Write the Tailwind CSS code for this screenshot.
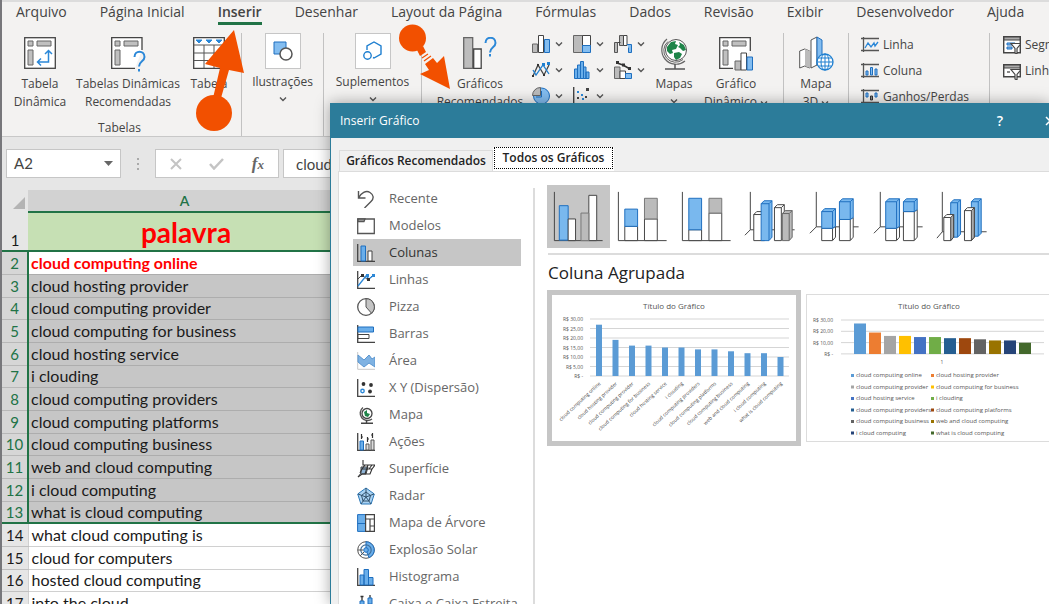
<!DOCTYPE html>
<html lang="pt-BR">
<head>
    <meta charset="UTF-8">
    <meta name="viewport" content="width=device-width, initial-scale=1.0">
    <title>Inserir Gráfico</title>
    <script src="https://cdn.jsdelivr.net/npm/@tailwindcss/browser@4"></script>
</head>
<body class="relative h-screen overflow-hidden border-l-2 border-[#77777b] bg-[#e6e6e6] font-['Open_Sans',sans-serif] text-[#444]">

    <!-- shared icons -->
    <svg class="hidden">
        <symbol id="chev" viewBox="0 0 8 6"><path d="M1 1.5l3 3 3-3" fill="none" stroke="#555" stroke-width="1.4"/></symbol>
        <symbol id="globe" viewBox="0 0 32 34">
            <path d="M9 3A14 14 0 1 0 27 25" fill="none" stroke="#666" stroke-width="1.2"/>
            <path d="M10 5.500A11.500 11.500 0 1 0 25 23.500" fill="none" stroke="#666" stroke-width="1"/>
            <circle cx="18" cy="14" r="10.500" fill="#fff" stroke="#555"/>
            <path d="M9 11l4-5 5-1-1 3 3 1-2 4-4 1 1 3-3 1-3-3zM21 6l5 3 2 5-3 1-3-3-2-1 2-2zM16 17l5-1 3 2-2 4-4 2-2-3z" fill="#1e8449"/>
            <path d="M17 28v5M7 33h20" stroke="#555" stroke-width="1.500"/>
        </symbol>
        <symbol id="globeSmall" viewBox="0 0 18 18">
            <path d="M6 1.500A7 7 0 1 0 15 13" fill="none" stroke="#555" stroke-width="1.400"/>
            <circle cx="10" cy="7.500" r="5" fill="#fff" stroke="#444" stroke-width="1.300"/>
            <path d="M7 6l3-2v3l3 1-2 3-3-1z" fill="#1e8449"/>
            <path d="M9.500 14v3M4 17.200h12" stroke="#444" stroke-width="1.400"/>
        </symbol>
    </svg>

    <nav class="flex h-[27px] items-start gap-[33px] overflow-hidden border-t-2 border-[#dcdcdc] bg-[#f3f2f1] pl-[14px] text-[14px] leading-5 whitespace-nowrap">
        <a href="#">Arquivo</a>
        <a href="#">Página Inicial</a>
        <a href="#" class="border-b-[3px] border-[#217346] font-semibold">Inserir</a>
        <a href="#">Desenhar</a>
        <a href="#">Layout da Página</a>
        <a href="#">Fórmulas</a>
        <a href="#">Dados</a>
        <a href="#">Revisão</a>
        <a href="#">Exibir</a>
        <a href="#">Desenvolvedor</a>
        <a href="#">Ajuda</a>
    </nav>

    <section class="flex h-[110px] overflow-hidden border-b border-[#c8c8c8] bg-[#f3f2f1] pt-[6px] text-[12px] leading-[18px] *:shrink-0 *:border-r *:border-[#c2c2c2]">
        <div class="flex w-[240px] flex-col px-1">
            <div class="flex pt-1">
                <button class="flex w-[68px] flex-col items-center gap-[6px]">
                    <svg class="size-8" viewBox="0 0 32 32" fill="none">
                        <rect x=".7" y=".7" width="30.600" height="30.600" fill="#fff" stroke="#444" stroke-width="1.300"/>
                        <path d="M4 4h5v5H4zM13 4h14v5H13zM4 13h5v15H4z" fill="#c0c0c0" stroke="#666"/>
                        <path d="M24.500 14v11H14M21 17l3.500-3.500L28 17M17 21.500L13.500 25l3.500 3.500" stroke="#2b88d8" stroke-width="1.500"/>
                    </svg>
                    <span>Tabela<br>Dinâmica</span>
                </button>
                <button class="flex w-[108px] flex-col items-center gap-[6px] whitespace-nowrap">
                    <svg class="h-8 w-[34px] overflow-visible" viewBox="0 0 34 32" fill="none">
                        <path d="M31 13V.7H.7v30.600H24" fill="#fff" stroke="#444" stroke-width="1.300"/>
                        <path d="M4 4h5v5H4zM13 4h14v5H13zM4 13h5v15H4z" fill="#c0c0c0" stroke="#666"/>
                        <path d="M23.500 20c0-7 10-7 10 0 0 4.500-5.500 4-5.500 9.500M28 32v2.500" stroke="#2b88d8" stroke-width="2"/>
                    </svg>
                    <span>Tabelas Dinâmicas<br>Recomendadas</span>
                </button>
                <button class="flex w-[54px] flex-col items-center gap-[6px]">
                    <svg class="size-8" viewBox="0 0 32 32" fill="none">
                        <path d="M.7.7h30.600v30.600H.7z" fill="#fff" stroke="#444" stroke-width="1.300"/>
                        <path d="M1 8h30M1 16h30M1 23.500h30M11 8v23M21 8v23" stroke="#555"/>
                        <path d="M3 3h6L6 6zM13 3h6l-3 3zM23 3h6l-3 3z" fill="#2b88d8" stroke="#2b88d8"/>
                    </svg>
                    <span>Tabela</span>
                </button>
            </div>
            <p class="mt-auto pr-1 text-center leading-4">Tabelas</p>
        </div>

        <div class="w-[82px]">
            <button class="flex w-full flex-col items-center">
                <span class="flex size-9 items-center justify-center border border-[#c6c6c6] bg-white">
                    <svg class="size-5" viewBox="0 0 20 20"><path d="M1 1h12v12H1z" fill="#83bdf0" stroke="#1e6fbf"/><circle cx="13" cy="13" r="6" fill="#fff" stroke="#555" stroke-width="1.500"/></svg>
                </span>
                <span class="mt-1">Ilustrações</span>
                <svg class="mt-[5px] h-[6px] w-2"><use href="#chev"/></svg>
            </button>
        </div>

        <div class="w-[98px]">
            <button class="flex w-full flex-col items-center">
                <span class="flex size-9 items-center justify-center border border-[#c6c6c6] bg-white">
                    <svg class="size-5" viewBox="0 0 20 20" fill="none" stroke="#1e7fd0" stroke-width="1.400"><path d="M4 9V5l7-4 7 4v8l-7 4-1-.5"/><circle cx="4.500" cy="14.500" r="3.700"/></svg>
                </span>
                <span class="mt-1">Suplementos</span>
                <svg class="mt-[5px] h-[6px] w-2"><use href="#chev"/></svg>
            </button>
        </div>

        <div class="flex w-[362px] items-start pl-[10px]">
            <button class="flex w-[96px] flex-col items-center gap-[6px] pt-1">
                <svg class="h-8 w-[34px]" viewBox="0 0 34 32" fill="none">
                    <path d="M.7.7h9v30.600h-9z" fill="#bdbdbd" stroke="#666" stroke-width="1.300"/>
                    <path d="M10.700 12h7.500v19.300h-7.500z" fill="#fff" stroke="#444" stroke-width="1.300"/>
                    <path d="M22.500 6c0-7 10-7 10 0 0 4.500-5.500 4-5.500 9.500M27 17v2.500" stroke="#2b88d8" stroke-width="2"/>
                </svg>
                <span>Gráficos<br>Recomendados</span>
            </button>
            <div class="ml-1 grid w-[123px] grid-cols-3 gap-y-2 pt-[2px] *:flex *:items-center *:gap-[5px]">
                <button aria-label="Colunas">
                    <svg class="size-[18px]" viewBox="0 0 18 18"><path d="M.5 9h5v8.500h-5z" fill="#bbb" stroke="#666"/><path d="M6.500.5h5v17h-5z" fill="#fff" stroke="#444"/><path d="M12.500 4.500h5v13h-5z" fill="#83bdf0" stroke="#1e6fbf"/></svg>
                    <svg class="h-[6px] w-2"><use href="#chev"/></svg>
                </button>
                <button aria-label="Hierarquia">
                    <svg class="size-[18px]" viewBox="0 0 18 18"><path d="M.5.5h9v17h-9z" fill="#bbb" stroke="#666"/><path d="M9.500.5h8v10h-8z" fill="#fff" stroke="#444"/><path d="M9.500 10.500h8v7h-8z" fill="#83bdf0" stroke="#1e6fbf"/></svg>
                    <svg class="h-[6px] w-2"><use href="#chev"/></svg>
                </button>
                <button aria-label="Cascata">
                    <svg class="size-[18px]" viewBox="0 0 18 18"><path d="M.5 7.500h3v10h-3zM5.500.5h4v10h-4z" fill="#bbb" stroke="#555"/><path d="M3.500 7.500h3M9.500.5h3.500v10h-3.500z" fill="#fff" stroke="#444"/><path d="M13 9.500h4.500v8h-3v-5" fill="#83bdf0" stroke="#1e6fbf"/></svg>
                    <svg class="h-[6px] w-2"><use href="#chev"/></svg>
                </button>
                <button aria-label="Linhas">
                    <svg class="size-[18px]" viewBox="0 0 18 18" fill="none"><path d="M1 15L6 4l6 10 5-10" stroke="#444" stroke-width="1.300"/><path d="M1 9l3 5 7-10 6 9" stroke="#1e7fd0" stroke-width="1.300"/><path d="M0 14h2v2H0zM5 3h2v2H5zM11 13h2v2h-2z" fill="#333"/><path d="M10 2h3v3h-3zM15 1h3v3h-3z" fill="#1e7fd0"/></svg>
                    <svg class="h-[6px] w-2"><use href="#chev"/></svg>
                </button>
                <button aria-label="Histograma">
                    <svg class="size-[18px]" viewBox="0 0 18 18"><path d="M1.500 8h3v9.500h-3zM4.500 4h3v13.500h-3zM7.500.5h3v17h-3zM10.500 6h2.500v11.500h-2.500zM13 11h3v6.500h-3z" fill="#6aaeea" stroke="#1e6fbf"/></svg>
                    <svg class="h-[6px] w-2"><use href="#chev"/></svg>
                </button>
                <button aria-label="Combinação">
                    <svg class="size-[18px]" viewBox="0 0 18 18"><path d="M.5 6h5.500v11.500H.5z" fill="#bbb" stroke="#666"/><path d="M6 10h5.500v7.500H6z" fill="#fff" stroke="#444"/><path d="M11.500 12.500h6v5h-6z" fill="#83bdf0" stroke="#1e6fbf"/><path d="M3 2l6 2 7 4" fill="none" stroke="#333" stroke-width="1.500"/><path d="M2 0h3v3H2zM8 2.500h3v3H8zM14 6h3v3h-3z" fill="#333"/></svg>
                    <svg class="h-[6px] w-2"><use href="#chev"/></svg>
                </button>
                <button aria-label="Pizza">
                    <svg class="size-[18px]" viewBox="0 0 18 18"><circle cx="9.500" cy="9" r="8" fill="#83bdf0" stroke="#1e6fbf"/><path d="M8.500 8.500V.5a8 8 0 0 0-8 8z" fill="#bbb" stroke="#666"/><path d="M9.500 4v6H4" fill="none" stroke="#1e6fbf"/></svg>
                    <svg class="h-[6px] w-2"><use href="#chev"/></svg>
                </button>
                <button aria-label="Dispersão">
                    <svg class="size-[18px]" viewBox="0 0 18 18"><path d="M.7 0v17.300H18" fill="none" stroke="#444" stroke-width="1.400"/><path d="M4 10h2v2H4zM13 1h3v3h-3zM12 9h2v2h-2z" fill="#444"/><path d="M4 4h2v2H4zM8 7h2v2H8zM9 11h2v2H9z" fill="#2b88d8"/></svg>
                    <svg class="h-[6px] w-2"><use href="#chev"/></svg>
                </button>
            </div>
            <button class="flex w-[38px] flex-col items-center pt-[3px]">
                <svg class="h-[34px] w-8"><use href="#globe"/></svg>
                <span class="mt-[5px]">Mapas</span>
                <svg class="mt-[5px] h-[6px] w-2"><use href="#chev"/></svg>
            </button>
            <button class="ml-[7px] flex w-[72px] flex-col items-center gap-[6px] pt-1 whitespace-nowrap">
                <svg class="h-8 w-[34px] overflow-visible" viewBox="0 0 34 32">
                    <path d="M31.300 14V.7H.7v30.600H14" fill="#fff" stroke="#444" stroke-width="1.300"/>
                    <path d="M4 4h5v5H4zM13 4h14v5H13zM4 13h5v15H4z" fill="#c0c0c0" stroke="#666"/>
                    <path d="M16 24h6v9h-6z" fill="#bbb" stroke="#666"/><path d="M22 16h5.500v17H22z" fill="#fff" stroke="#444"/><path d="M28 20h5.500v13H28z" fill="#83bdf0" stroke="#1e6fbf"/>
                </svg>
                <span>Gráfico<br>Dinâmico <svg class="inline h-[6px] w-2"><use href="#chev"/></svg></span>
            </button>
        </div>

        <div class="w-[65px]">
            <button class="flex w-full flex-col items-center gap-[6px] pt-1">
                <svg class="h-8 w-[34px] overflow-visible" viewBox="0 0 34 32">
                    <path d="M.7 14l5-2 5 2v17l-5-2-5 2z" fill="#fff" stroke="#555"/><path d="M6 12l5 2v17l-5-2z" fill="#bbb"/>
                    <path d="M12 3l6-3v28l-6 3z" fill="#fff" stroke="#555"/><path d="M18 0l5 3v26l-5-1z" fill="#83bdf0" stroke="#1e6fbf"/>
                    <circle cx="26" cy="25" r="8" fill="#fff" stroke="#1e7fd0" stroke-width="1.300"/>
                    <path d="M18 25h16M26 17v16M19.500 21h13M19.500 29h13" stroke="#1e7fd0"/><ellipse cx="26" cy="25" rx="4" ry="8" fill="none" stroke="#1e7fd0"/>
                </svg>
                <span>Mapa<br>3D <svg class="inline h-[6px] w-2"><use href="#chev"/></svg></span>
            </button>
        </div>

        <div class="flex w-[141px] flex-col gap-2 pt-[3px] pl-3 *:flex *:items-center *:gap-1">
            <button>
                <svg class="size-[18px]" viewBox="0 0 18 18" fill="none"><path d="M2.500 1v15M0 2.500h18M0 14.500h18" stroke="#555" stroke-width="1.300"/><path d="M4 12l3-5 3 4 3-4 1 3 3-4" stroke="#2b88d8" stroke-width="1.300"/></svg>
                Linha
            </button>
            <button>
                <svg class="size-[18px]" viewBox="0 0 18 18" fill="none"><path d="M2.500 1v15M0 2.500h18M0 14.500h18" stroke="#555" stroke-width="1.300"/><path d="M5 9h2v4H5zM9.500 5.500h2V13h-2zM14 7h2v6h-2z" fill="#83bdf0" stroke="#1e6fbf"/></svg>
                Coluna
            </button>
            <button>
                <svg class="size-[18px]" viewBox="0 0 18 18" fill="none"><path d="M2.500 1v15M0 2.500h18M0 14.500h18" stroke="#555" stroke-width="1.300"/><path d="M5 5h2v4H5zM14 5h2v4h-2z" fill="#83bdf0" stroke="#1e6fbf"/><path d="M9.500 8h2v4h-2z" fill="#888" stroke="#333"/></svg>
                Ganhos/Perdas
            </button>
        </div>

        <div class="flex w-[140px] flex-col gap-2 pt-[3px] pl-[13px] *:flex *:items-center *:gap-1">
            <button>
                <svg class="size-[18px]" viewBox="0 0 18 18"><path d="M.7.7h16.600v16H.7z" fill="#fff" stroke="#444" stroke-width="1.400"/><path d="M1 1h16v3H1z" fill="#aaa" stroke="#444"/><path d="M4 7h8v2H4zM4 11h5v2H4z" fill="#83bdf0" stroke="#1e6fbf"/><path d="M8 7.500h10l-4 5V18l-2-1v-4.500z" fill="#fff" stroke="#444" stroke-width="1.200"/></svg>
                Segmentação
            </button>
            <button>
                <svg class="size-[18px]" viewBox="0 0 18 18"><path d="M.7 2.700h16.600v12H.7z" fill="#fff" stroke="#444" stroke-width="1.400"/><path d="M1 3h16v3H1z" fill="#aaa" stroke="#444"/><path d="M4 9h3v2H4z" fill="#888"/><path d="M8 7.500h10l-4 5V18l-2-1v-4.500z" fill="#fff" stroke="#444" stroke-width="1.200"/></svg>
                Linha do Tempo
            </button>
        </div>
    </section>

    <!-- formula bar -->
    <div class="flex h-[53px] items-center pl-1 font-['Lato',sans-serif] text-[15px]">
        <button class="flex h-[29px] w-[115px] items-center justify-between border border-[#c6c6c6] bg-white pr-[7px] pl-[7px]">
            A2
            <svg class="h-[5px] w-[9px]" viewBox="0 0 9 5"><path d="M0 0h9L4.500 5z" fill="#666"/></svg>
        </button>
        <svg class="mr-[15px] ml-4 h-3 w-[3px]" viewBox="0 0 3 12"><path d="M0 0h2v2H0zM0 5h2v2H0zM0 10h2v2H0z" fill="#aaa"/></svg>
        <div class="flex h-[29px] w-[124px] items-center justify-between border border-[#c6c6c6] bg-white px-[14px]">
            <button aria-label="Cancelar"><svg class="size-3" viewBox="0 0 12 12"><path d="M1 1l10 10M11 1L1 11" stroke="#c4c4c4" stroke-width="2"/></svg></button>
            <button aria-label="Inserir"><svg class="h-3 w-[15px]" viewBox="0 0 15 12"><path d="M1 6l4 4.500L14 1" fill="none" stroke="#c4c4c4" stroke-width="2.500"/></svg></button>
            <button class="font-['Liberation_Serif',serif] text-[17px] leading-none font-bold text-[#666] italic" aria-label="Inserir função">f<span class="text-[13px]">x</span></button>
        </div>
        <input aria-label="Barra de fórmulas" value="cloud computing online" class="ml-1 h-[29px] flex-1 border border-[#c6c6c6] bg-white pl-3">
    </div>

    <!-- worksheet -->
    <table class="w-[339px] table-fixed border-collapse bg-white font-['Lato',sans-serif] text-[16px] leading-5 text-[#1a1a1a]">
        <thead>
            <tr class="h-[22px] bg-[#e6e6e6]">
                <th class="w-[26px] pr-[3px]"><svg class="mt-1 ml-auto size-3" viewBox="0 0 12 12"><path d="M12 0v12H0z" fill="#b4b4b4"/></svg></th>
                <th class="border-b-2 border-[#217346] bg-[#d2d2d2] text-[14px] font-semibold text-[#217346]">A</th>
            </tr>
        </thead>
        <tbody class="[&_td]:truncate [&_td]:border-b [&_td]:border-[#b0b0b0] [&_td]:py-0 [&_td]:pl-[3px] [&_th]:border-b [&_th]:border-[#c0c0c0] [&_th]:bg-[#e6e6e6] [&_th]:p-0 [&_th]:text-[15px] [&_th]:font-normal">
            <tr class="h-[39px] text-center"><th class="align-bottom">1</th><td class="bg-[#c6e0b4] text-[28px] font-bold text-[#f00]">palavra</td></tr>
        </tbody>
        <tbody class="border-y-2 border-[#217346] [&_td]:truncate [&_td]:border-b [&_td]:border-l-2 [&_td]:border-b-[#adadad] [&_td]:border-l-[#217346] [&_td]:bg-[#c6c6c6] [&_td]:py-0 [&_td]:pl-[2px] [&_th]:border-b [&_th]:border-b-[#b8b8b8] [&_th]:bg-[#d6d6d6] [&_th]:p-0 [&_th]:text-[15px] [&_th]:font-normal [&_th]:text-[#217346] [&_tr]:h-[23px] [&_tr:nth-child(3n)]:h-[22px]">
            <tr><th>2</th><td class="bg-white! font-bold text-[#f00]">cloud computing online</td></tr>
            <tr><th>3</th><td>cloud hosting provider</td></tr>
            <tr><th>4</th><td>cloud computing provider</td></tr>
            <tr><th>5</th><td>cloud computing for business</td></tr>
            <tr><th>6</th><td>cloud hosting service</td></tr>
            <tr><th>7</th><td>i clouding</td></tr>
            <tr><th>8</th><td>cloud computing providers</td></tr>
            <tr><th>9</th><td>cloud computing platforms</td></tr>
            <tr><th>10</th><td>cloud computing business</td></tr>
            <tr><th>11</th><td>web and cloud computing</td></tr>
            <tr><th>12</th><td>i cloud computing</td></tr>
            <tr><th>13</th><td>what is cloud computing</td></tr>
        </tbody>
        <tbody class="[&_td]:truncate [&_td]:border-b [&_td]:border-l [&_td]:border-[#d0d0d0] [&_td]:py-0 [&_td]:pl-[3px] [&_th]:border-b [&_th]:border-[#c0c0c0] [&_th]:bg-[#e6e6e6] [&_th]:p-0 [&_th]:text-[15px] [&_th]:font-normal [&_tr]:h-[23px] [&_tr:nth-child(3n)]:h-[22px]">
            <tr><th>14</th><td>what cloud computing is</td></tr>
            <tr><th>15</th><td>cloud for computers</td></tr>
            <tr><th>16</th><td>hosted cloud computing</td></tr>
            <tr><th>17</th><td>into the cloud</td></tr>
        </tbody>
    </table>

    <!-- dialog -->
    <div role="dialog" aria-labelledby="dialogTitle" class="absolute top-[103px] right-0 bottom-0 left-[328px] flex flex-col border-l border-[#2c7c9a] bg-[#f0f0f0] shadow-[0_0_14px_rgba(0,0,0,0.35)]">
        <header class="flex h-[35px] shrink-0 items-center overflow-hidden bg-[#2c7c9a] pl-[9px] text-[12px] text-white">
            <h2 id="dialogTitle">Inserir Gráfico</h2>
            <button class="ml-auto w-10 text-[14px] font-semibold" aria-label="Ajuda">?</button>
            <button class="ml-[25px] -mr-[6px]" aria-label="Fechar"><svg class="size-[10px]" viewBox="0 0 10 10"><path d="M1 1l8 8M9 1L1 9" stroke="#fff" stroke-width="1.500"/></svg></button>
        </header>

        <div role="tablist" class="flex items-end pt-[9px] pl-2 text-[12px] leading-4 font-semibold text-[#222]">
            <button role="tab" class="h-[21px] w-[154px] border border-b-0 border-[#dcdcdc] whitespace-nowrap">Gráficos Recomendados</button>
            <button role="tab" aria-selected="true" class="h-6 w-[121px] bg-white px-px pb-[2px] whitespace-nowrap"><span class="block h-full border border-dotted border-black leading-5">Todos os Gráficos</span></button>
        </div>

        <div class="ml-[7px] flex min-h-0 flex-1 overflow-hidden border-t border-l border-[#dcdcdc] bg-white">
            <ul class="mt-[13px] ml-[14px] w-[168px] shrink-0 text-[13px] text-[#666] [&_button]:flex [&_button]:h-[27px] [&_button]:w-full [&_button]:items-center [&_button]:gap-[14px] [&_button]:pl-1 [&_button]:whitespace-nowrap [&_svg]:size-[18px] [&_svg]:shrink-0">
                <li><button><svg viewBox="0 0 18 18" fill="none" stroke="#555" stroke-width="1.400"><path d="M1.500 1v7h7M1.500 8C4 3 9 0 13 2.500s4 6 1 9L7.500 18"/></svg>Recente</button></li>
                <li><button><svg viewBox="0 0 18 18" fill="none" stroke="#555" stroke-width="1.300"><path d="M.7 2h16.600v14.500H.7z"/><path d="M1 2h7l-1 2.500H1z" fill="#aaa"/></svg>Modelos</button></li>
                <li><button class="bg-[#c6c6c6] text-[#333]"><svg viewBox="0 0 18 18"><path d="M.7 0v17.300H18" fill="none" stroke="#444" stroke-width="1.300"/><path d="M4 2h4.500v15H4z" fill="#6aaeea" stroke="#1e6fbf"/><path d="M11 7h4v10h-4z" fill="#fff" stroke="#444"/></svg>Colunas</button></li>
                <li><button><svg viewBox="0 0 18 18" fill="none"><path d="M.7 0v17.300H18" stroke="#444" stroke-width="1.300"/><path d="M1 8l4-4 6 5 5-5" stroke="#444"/><path d="M1 15L9 5l3 3 5-4" stroke="#2b88d8" stroke-width="1.300"/><path d="M4 3h3v3H4zM10 7h3v3h-3z" fill="#333"/><path d="M15 3h3v3h-3zM9 3h3v3H9z" fill="#2b88d8"/></svg>Linhas</button></li>
                <li><button><svg viewBox="0 0 18 18"><circle cx="9" cy="9" r="8.300" fill="#fff" stroke="#555" stroke-width="1.300"/><path d="M9 .7V9l5.500 6.200A8.300 8.300 0 0 0 9 .7z" fill="#c4c4c4" stroke="#555"/></svg>Pizza</button></li>
                <li><button><svg viewBox="0 0 18 18"><path d="M.7 0v17.300H18" fill="none" stroke="#444" stroke-width="1.300"/><path d="M1 2h15.500v5H1z" fill="#6aaeea" stroke="#1e6fbf"/><path d="M1 9.500h11v4H1z" fill="#fff" stroke="#444"/></svg>Barras</button></li>
                <li><button><svg viewBox="0 0 18 18"><path d="M.7 0v17.300H18" fill="none" stroke="#c8c8c8"/><path d="M1 3l6 5 5-5 3 4 3-2v10l-6-4-5 4-6-5z" fill="#7fb2e2" stroke="#5b96d0"/></svg>Área</button></li>
                <li><button><svg viewBox="0 0 18 18"><path d="M.7 0v17.300H18" fill="none" stroke="#444" stroke-width="1.300"/><g fill="#333"><circle cx="6.500" cy="5" r="1.900"/><circle cx="14" cy="6" r="1.900"/><circle cx="13" cy="12.500" r="1.900"/></g><circle cx="5.500" cy="12" r="1.700" fill="#fff" stroke="#2b88d8" stroke-width="1.400"/></svg>X Y (Dispersão)</button></li>
                <li><button><svg><use href="#globeSmall"/></svg>Mapa</button></li>
                <li><button><svg viewBox="0 0 18 18"><path d="M.7 0v17.300H18" fill="none" stroke="#444" stroke-width="1.300"/><path d="M3 8h3.500v9H3z" fill="#6aaeea" stroke="#1e6fbf"/><path d="M9 11h3v6H9zM14 7h3v10h-3z" fill="#ddd" stroke="#555"/><path d="M4.500 1v5M10.500 4v5M15.500 0v5M4.500 4h1.500M10.500 6H12M14 2h1.500" stroke="#333" stroke-width="1.200"/></svg>Ações</button></li>
                <li><button><svg viewBox="0 0 18 18"><path d="M1 17l3-4V7h7l-2 7H4" fill="#8fb4d6" stroke="#444"/><path d="M6 0v5h12l-3 4H5l3-4M5 9l-2 4M11 5l-3 9M15 5l-3 4M1 17l4-3h8l2-5" fill="none" stroke="#333" stroke-width="1.100"/></svg>Superfície</button></li>
                <li><button><svg viewBox="0 0 18 18"><path d="M9 1l8.300 6-3.200 10H3.900L.7 7z" fill="#a9d2f3" stroke="#2b78b8"/><path d="M9 1v9M17 7l-8 3M14 17l-5-7M4 17l5-7M1 7l8 3M9 5l4.500 3.500L12 14H6L4.500 8.500z" fill="none" stroke="#31506b"/></svg>Radar</button></li>
                <li><button><svg viewBox="0 0 18 18"><path d="M.6.6h8v16.800h-8z" fill="#6aaeea" stroke="#1e6fbf"/><path d="M.6 9.500h8" stroke="#1e6fbf"/><path d="M8.600.6h8.800v16.800H8.600zM8.600 5h8.800M13 5v12.400M13 12h4.400" fill="#fff" stroke="#444" stroke-width="1.200"/></svg>Mapa de Árvore</button></li>
                <li><button><svg viewBox="0 0 18 18"><circle cx="9" cy="9" r="8.300" fill="#fff" stroke="#555"/><path d="M9 .7a8.300 8.300 0 0 1 3 16L9 9z" fill="#6aaeea" stroke="#1e6fbf"/><circle cx="9" cy="9" r="5.200" fill="none" stroke="#3f6f9a" stroke-width="1.200"/><circle cx="9" cy="9" r="2.300" fill="#6aaeea" stroke="#1e6fbf"/><path d="M1 9h5M3 15l4-4" stroke="#555"/></svg>Explosão Solar</button></li>
                <li><button><svg viewBox="0 0 18 18"><path d="M.7 0v17.300H18" fill="none" stroke="#444" stroke-width="1.300"/><path d="M3 7h4v10H3zM7 1.500h4.500V17H7zM11.500 9.500H16V17h-4.500z" fill="#6aaeea" stroke="#1e6fbf"/></svg>Histograma</button></li>
                <li><button><svg viewBox="0 0 18 18"><path d="M5 1v15M3.500 1.500h3M13 0v16" stroke="#333" stroke-width="1.300"/><path d="M3 6h4v6H3zM11 3h4v6h-4z" fill="#6aaeea" stroke="#1e6fbf"/></svg>Caixa e Caixa Estreita</button></li>
            </ul>

            <div class="mt-4 ml-3 min-w-0 flex-1 border-l-2 border-[#dcdcdc]">
                <div class="-mt-[3px] flex gap-px pl-3 [&_svg]:size-[63px]">
                    <button class="bg-[#c6c6c6]" aria-label="Coluna Agrupada"><svg viewBox="0 0 64 64" fill="none" stroke="#444"><path d="M7.500 7v49.500h49"/><path d="M12.500 21h9v35h-9z" fill="#79b8ee" stroke="#1e6fbf"/><path d="M21.500 34.500h7.500v22h-7.500zM42.500 10.500h8v46h-8z" fill="#fff"/><path d="M34.500 28.500h8v28h-8z" fill="#bbb" stroke="#777"/></svg></button>
                    <button aria-label="Coluna Empilhada"><svg viewBox="0 0 64 64" fill="none" stroke="#444"><path d="M7.500 7v49.500h49"/><path d="M14 42h13v14.500H14zM34 34.500h13v22H34z" fill="#fff"/><path d="M14 24.500h13V42H14z" fill="#79b8ee" stroke="#1e6fbf"/><path d="M34 13.500h13v21H34z" fill="#bbb" stroke="#777"/></svg></button>
                    <button aria-label="Coluna 100% Empilhada"><svg viewBox="0 0 64 64" fill="none" stroke="#444"><path d="M7.500 7v49.500h49"/><path d="M14 45.500h13v11H14zM34.500 28.500h13v28h-13z" fill="#fff"/><path d="M14 13.500h13v32H14z" fill="#79b8ee" stroke="#1e6fbf"/><path d="M34.500 13.500h13v15h-13z" fill="#bbb" stroke="#777"/></svg></button>
                    <button aria-label="Coluna 3D Agrupada"><svg viewBox="0 0 64 64" fill="none" stroke="#444"><path d="M11.500 7v38.500h45M11.500 45.500L6 51"/><path d="M15 30l3-3h8v29.500H15zM36 23l3-3h7v33l-3 3.500h-7z" fill="#fff"/><path d="M15 30h8M36 23h7v33M43 23l3-3"/><path d="M22.500 19l3-3h8v37l-3 3.500h-8z" fill="#79b8ee" stroke="#1e6fbf"/><path d="M22.500 19h8v37M30.500 19l3-3" stroke="#1e6fbf"/><path d="M44 29l3-3h7v27l-3 3.500h-7z" fill="#bbb" stroke="#666"/><path d="M44 29h7v27M51 29l3-3" stroke="#666"/></svg></button>
                    <button aria-label="Coluna 3D Empilhada"><svg viewBox="0 0 64 64" fill="none" stroke="#444"><path d="M13.500 7v35.500h43M13.500 42.500L7 49"/><path d="M19 44h11l3-2v11l-3 3.500H19zM37 35h11l3-2v20l-3 3.500H37zM30 44v12M48 35v21" fill="#fff"/><path d="M19 27l3-3h11v18l-3 2H19zM37 17l3-3h11v19l-3 2H37z" fill="#79b8ee" stroke="#1e6fbf"/><path d="M19 27h11v17M30 27l3-3M37 17h11v18M48 17l3-3" stroke="#1e6fbf"/></svg></button>
                    <button aria-label="Coluna 3D 100% Empilhada"><svg viewBox="0 0 64 64" fill="none" stroke="#444"><path d="M13.500 7v35.500h43M13.500 42.500L7 49"/><path d="M19 44h11l3-2v11l-3 3.500H19zM37 27h11l3-2v28l-3 3.500H37zM30 44v12M48 27v29" fill="#fff"/><path d="M19 17l3-3h11v28l-3 2H19zM37 17l3-3h11v11l-3 2H37z" fill="#79b8ee" stroke="#1e6fbf"/><path d="M19 17h11v27M30 17l3-3M37 17h11v10M48 17l3-3" stroke="#1e6fbf"/></svg></button>
                    <button aria-label="Coluna 3D"><svg viewBox="0 0 64 64" fill="none" stroke="#444"><path d="M11.500 7v40.500h45M11.500 47.500L6 54"/><path d="M20 18l3-3h7v35l-3 3h-7zM41 17l3-3h7v35l-3 3h-7z" fill="#79b8ee" stroke="#1e6fbf"/><path d="M20 18h7v35M27 18l3-3M41 17h7v35M48 17l3-3" stroke="#1e6fbf"/><path d="M13 33l3-3h7v23l-3 3.500h-7zM34 26l3-3h7v30l-3 3.500h-7z" fill="#fff"/><path d="M20 33l3-3v23l-3 3.500zM41 26l3-3v30l-3 3.500z" fill="#aaa"/><path d="M13 33h7M34 26h7"/></svg></button>
                </div>
                <div class="mt-[5px] ml-[13px] border-t-2 border-[#dcdcdc]">
                    <h3 class="pt-[5px] pb-[3px] text-[17px] leading-[26px] text-[#222]">Coluna Agrupada</h3>
                </div>
                <div class="mt-px ml-3 flex items-center gap-[5px]">
                    <button class="shrink-0 border-[5px] border-[#c6c6c6]" aria-label="Visualização 1">
                        <svg id="preview1" class="h-[146px] w-[244px] font-['Open_Sans',sans-serif]" viewBox="0 0 244 146"></svg>
                    </button>
                    <button class="shrink-0 border border-[#dcdcdc]" aria-label="Visualização 2">
                        <svg id="preview2" class="h-[146px] w-[244px] font-['Open_Sans',sans-serif]" viewBox="0 0 244 146"></svg>
                    </button>
                </div>
            </div>
        </div>
    </div>

    <!-- pointer arrows -->
    <svg class="pointer-events-none absolute top-0 left-0 h-[140px] w-[460px]" viewBox="2 0 460 140" fill="#f25000">
        <path d="M234 30L205 64l15 4-7 30h8l8-28 15 3z"/>
        <circle cx="214" cy="113" r="18"/>
        <circle cx="412.500" cy="38" r="13.500"/>
        <path d="M450 89l-30-15 9-4-4-6 8-6 4 5 7-7zM417 50l6-4 3 6-6 4z"/>
        <path d="M422 58l6-4M424 61l7-5" stroke="#f25000" stroke-width="1.200"/>
    </svg>

    <script>
        const data = [
            ['cloud computing online', 27, '#5b9bd5'],
            ['cloud hosting provider', 19, '#ed7d31'],
            ['cloud computing provider', 16, '#a5a5a5'],
            ['cloud computing for business', 16, '#ffc000'],
            ['cloud hosting service', 15, '#4472c4'],
            ['i clouding', 15, '#70ad47'],
            ['cloud computing providers', 14, '#255e91'],
            ['cloud computing platforms', 14, '#9e480e'],
            ['cloud computing business', 13, '#636363'],
            ['web and cloud computing', 12, '#997300'],
            ['i cloud computing', 12, '#264478'],
            ['what is cloud computing', 10, '#43682b']
        ];

        // single series with rotated category labels
        let one = '<text x="122" y="14" font-size="8" text-anchor="middle" fill="#555">Título do Gráfico</text>';
        for (let i = 0; i <= 6; i++) {
            let y = 24 + i * 9.5;
            let label = i === 6 ? 'R$ -' : 'R$ ' + (30 - i * 5) + ',00';
            one += `<path d="M38 ${y}H237" stroke="#d5d5d5"/><text x="31" y="${y + 2}" font-size="5" text-anchor="end" fill="#555">${label}</text>`;
        }
        data.forEach(([name, value], i) => {
            let x = 44 + i * 16.5;
            let h = value * 1.9;
            one += `<rect x="${x}" y="${81 - h}" width="6" height="${h}" fill="#5b9bd5"/>`;
            one += `<text transform="translate(${x + 5} 89) rotate(-43)" font-size="5" text-anchor="end" fill="#444">${name}</text>`;
        });
        document.getElementById('preview1').innerHTML = one;

        // one series per item, legend below
        let two = '<text x="122" y="14" font-size="8" text-anchor="middle" fill="#555">Título do Gráfico</text>';
        ['R$ 30,00', 'R$ 20,00', 'R$ 10,00', 'R$ -'].forEach((label, i) => {
            let y = 25 + i * 11.3;
            two += `<path d="M34 ${y}H237" stroke="#d5d5d5"/><text x="26" y="${y + 2}" font-size="5" text-anchor="end" fill="#555">${label}</text>`;
        });
        data.forEach(([name, value, color], i) => {
            let h = value * 1.13;
            let lx = 44 + (i % 2) * 80;
            let ly = 80 + Math.floor(i / 2) * 11.5;
            two += `<rect x="${47 + i * 15}" y="${59 - h}" width="12" height="${h}" fill="${color}"/>`;
            two += `<rect x="${lx}" y="${ly - 1}" width="3" height="3" fill="${color}"/><text x="${lx + 5}" y="${ly + 2}" font-size="6" fill="#555">${name}</text>`;
        });
        two += '<text x="135" y="69" font-size="5" text-anchor="middle" fill="#555">1</text>';
        document.getElementById('preview2').innerHTML = two;
    </script>
</body>
</html>
